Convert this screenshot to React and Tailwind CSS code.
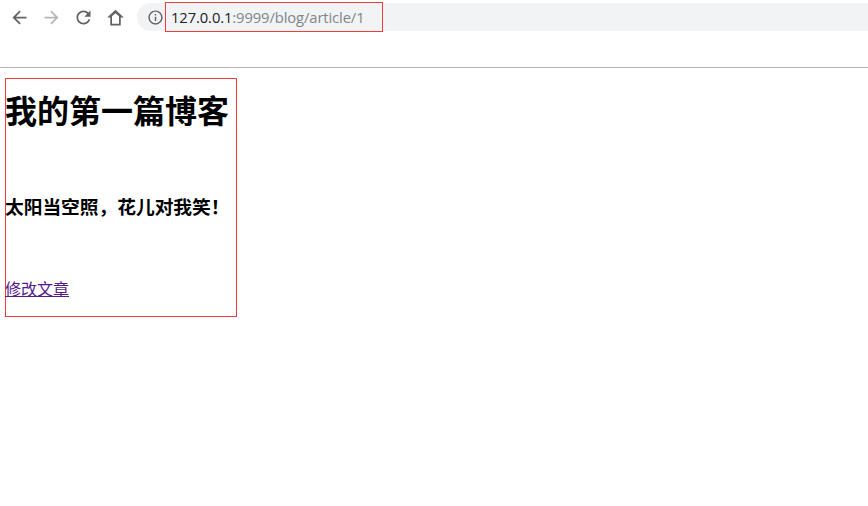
import React from "react";

const cjk = "font-['Liberation_Sans','Noto_Sans_CJK_SC',sans-serif]";

function NavIcon({ d, className }) {
  return (
    <svg viewBox="0 0 24 24" className={`w-[21px] h-[21px] ${className}`} fill="currentColor">
      <path d={d} fillRule="evenodd" />
    </svg>
  );
}

function Toolbar() {
  return (
    <div className="h-[68px] border-b border-[#b3b3b3] bg-white">
      <div className="flex items-center h-[34px] pl-[3px]">
        <div className="flex">
          <div className="w-8 flex justify-center">
            <NavIcon className="text-[#5f6368]" d="M20 11H7.83l5.59-5.59L12 4l-8 8 8 8 1.41-1.41L7.83 13H20v-2z" />
          </div>
          <div className="w-8 flex justify-center">
            <NavIcon className="text-[#b4b6b9]" d="M4 11h12.17l-5.59-5.59L12 4l8 8-8 8-1.41-1.41L16.17 13H4v-2z" />
          </div>
          <div className="w-8 flex justify-center">
            <NavIcon className="text-[#5f6368]" d="M17.65 6.35C16.2 4.9 14.21 4 12 4c-4.42 0-7.99 3.58-7.99 8s3.57 8 7.99 8c3.73 0 6.84-2.55 7.73-6h-2.08c-.82 2.33-3.04 4-5.65 4-3.31 0-6-2.69-6-6s2.69-6 6-6c1.66 0 3.14.69 4.22 1.78L13 11h7V4l-2.35 2.35z" />
          </div>
          <div className="w-8 flex justify-center">
            <NavIcon className="text-[#5f6368]" d="M12 3L2.5 12H6v9h12v-9h3.5L12 3zM8 19v-8.3l4-3.7 4 3.7V19H8z" />
          </div>
        </div>
        <div className="relative flex items-center flex-1 h-[28px] ml-[6px] rounded-l-full bg-[#f1f3f4]">
          <svg viewBox="0 0 24 24" className="w-[17px] h-[17px] ml-[10px] text-[#5f6368]" fill="currentColor">
            <path d="M11 7h2v2h-2zm0 4h2v6h-2zm1-9C6.48 2 2 6.48 2 12s4.48 10 10 10 10-4.48 10-10S17.52 2 12 2zm0 18c-4.41 0-8-3.59-8-8s3.59-8 8-8 8 3.59 8 8-3.59 8-8 8z" />
          </svg>
          <span className="ml-[7px] font-['Open_Sans',sans-serif] text-[14.75px] tracking-[-0.1px] text-[#80868b]">
            <span className="text-[#202124]">127.0.0.1</span>:9999/blog/article/1
          </span>
          <div className="absolute left-[28px] top-[-1px] w-[218px] h-[30px] border border-[#f03c3c]"></div>
        </div>
      </div>
    </div>
  );
}

function App() {
  return (
    <div className={`min-h-screen bg-white ${cjk}`}>
      <Toolbar />
      <div className="pt-[10px] pl-[5px]">
        <div className="w-[232px] h-[239px] border border-[#f03c3c] text-black">
          <h1 className="text-[32px] font-bold leading-[36px] mt-[15px] -ml-px">我的第一篇博客</h1>
          <h3 className="text-[18.72px] font-bold leading-[24px] mt-[66px] -ml-px">太阳当空照，花儿对我笑！</h3>
          <a href="#" className="block w-fit text-[16px] leading-[20px] mt-[60px] -ml-px text-[#551a8b] underline">修改文章</a>
        </div>
      </div>
    </div>
  );
}

export default App;
